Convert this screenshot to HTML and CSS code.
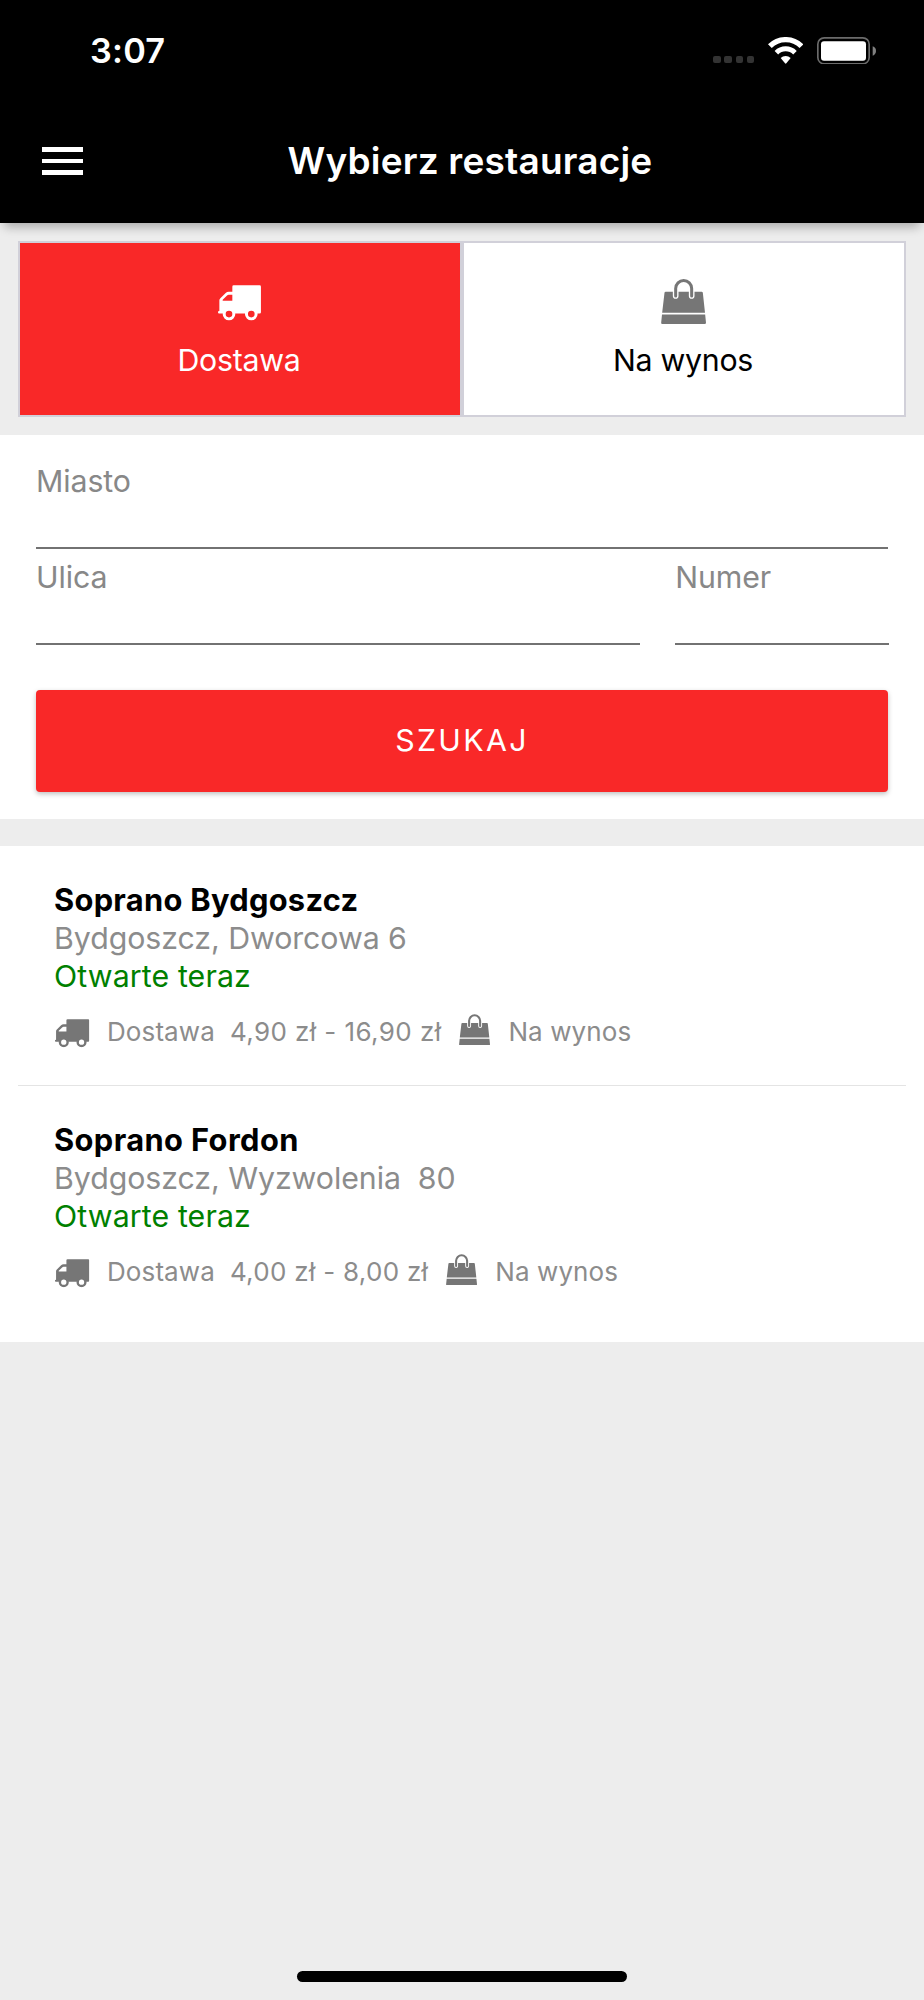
FILE: index.html
```html
<!DOCTYPE html>
<html lang="pl">
<head>
<meta charset="utf-8">
<title>Wybierz restauracje</title>
<link rel="stylesheet" href="styles.css">
</head>
<body>
<svg class="defs" aria-hidden="true">
  <symbol id="truck" viewBox="657 197 130 107">
    <path fill="currentColor" fill-rule="evenodd" d="M704 198H782Q786 198 786 202V279Q786 283 782 283H771.500A14.500 14.500 0 0 0 742.500 283H704.500A14.500 14.500 0 0 0 675.500 283H660Q657 283 657 280V277Q657 275 661 275V243Q661 240 664 237L680 221Q684 217 689 217H700V202Q700 198 704 198ZM700 226H689Q687 226 685 228L671 241V244H700Z"/>
    <g fill="none" stroke="currentColor" stroke-width="9"><circle cx="690" cy="284.500" r="14.500"/><circle cx="757" cy="284.500" r="14.500"/></g>
  </symbol>
  <symbol id="bag" viewBox="597 178 135 135">
    <path fill="currentColor" d="M611 216H719Q722 216 722.500 219L729 279H600.500L607.500 219Q608 216 611 216ZM600 284.500H729.500L732 309Q732 313 728 313H601Q597 313 597.500 309Z"/>
    <path fill="none" stroke="#fff" stroke-width="17" stroke-linecap="round" d="M641 229V216M689 229V216"/>
    <path fill="none" stroke="currentColor" stroke-width="9" stroke-linecap="round" d="M641 229V206.500a24 24 0 0 1 48 0V229"/>
  </symbol>
</svg>

<header class="header">
  <div class="status">
    <span class="clock">3:07</span>
    <div class="indicators">
      <div class="signal"><i></i><i></i><i></i><i></i></div>
      <svg class="wifi" viewBox="916 110 107 81">
        <g fill="none" stroke="#fff" stroke-width="16"><path d="M921.600 137.600a67 67 0 0 1 94.800 0"/><path stroke-width="15" d="M941.100 157.100a39.500 39.500 0 0 1 55.800 0"/></g>
        <path fill="#fff" d="M954 173a21 21 0 0 1 30 0L971 189q-2 2-4 0Z"/>
      </svg>
      <svg class="battery" viewBox="1065 109 177 83">
        <rect x="1067.500" y="111.500" width="154" height="78" rx="19" fill="none" stroke="#6b6b6b" stroke-width="5"/>
        <rect x="1077" y="122" width="135" height="58" rx="9" fill="#fff"/>
        <path d="M1232 137q10 4 10 14t-10 14Z" fill="#808080"/>
      </svg>
    </div>
  </div>
  <div class="toolbar">
    <div class="menu"><i></i><i></i><i></i></div>
    <h1 class="title">Wybierz restauracje</h1>
  </div>
</header>

<main>
  <nav class="tabs">
    <div class="tab tab-active">
      <span class="tab-icon"><svg class="truck-lg"><use href="#truck"/></svg></span>
      <span class="tab-label">Dostawa</span>
    </div>
    <div class="tab">
      <span class="tab-icon"><svg class="bag-lg"><use href="#bag"/></svg></span>
      <span class="tab-label">Na wynos</span>
    </div>
  </nav>

  <section class="form">
    <div class="field">Miasto</div>
    <div class="row">
      <div class="field field-street">Ulica</div>
      <div class="field field-number">Numer</div>
    </div>
    <div class="button">SZUKAJ</div>
  </section>

  <section class="list">
    <article class="item">
      <h2 class="name">Soprano Bydgoszcz</h2>
      <p class="address">Bydgoszcz, Dworcowa 6</p>
      <p class="open">Otwarte teraz</p>
      <div class="meta">
        <svg class="truck-sm"><use href="#truck"/></svg>
        <span class="delivery">Dostawa</span>
        <span class="price">4,90 zł - 16,90 zł</span>
        <svg class="bag-sm"><use href="#bag"/></svg>
        <span>Na wynos</span>
      </div>
    </article>
    <article class="item">
      <h2 class="name name-short">Soprano Fordon</h2>
      <p class="address">Bydgoszcz, Wyzwolenia&nbsp; 80</p>
      <p class="open">Otwarte teraz</p>
      <div class="meta">
        <svg class="truck-sm"><use href="#truck"/></svg>
        <span class="delivery">Dostawa</span>
        <span class="price price-short">4,00 zł - 8,00 zł</span>
        <svg class="bag-sm"><use href="#bag"/></svg>
        <span>Na wynos</span>
      </div>
    </article>
  </section>
</main>
<div class="home-bar"></div>
</body>
</html>
```
FILE: styles.css
```css
* { box-sizing: border-box; }
body {
  position: relative;
  margin: 0;
  height: 2000px;
  background: #ededed;
  color: #000;
  font: 400 30.3px/38px Inter, "Liberation Sans", sans-serif;
  overflow: hidden;
}
h1, h2, p { margin: 0; }
svg { display: block; flex: none; }
.defs { position: absolute; width: 0; height: 0; }

.header {
  height: 223px;
  background: #000;
  color: #fff;
  box-shadow: 0 9px 9px -5px rgba(0, 0, 0, .2), 0 5px 14px -3px rgba(0, 0, 0, .12);
}
.status {
  display: flex;
  justify-content: space-between;
  align-items: center;
  height: 101px;
  padding: 0 48px 0 90px;
}
.clock { font-size: 34.3px; font-weight: 600; letter-spacing: .2px; }
.indicators { display: flex; align-items: center; }
.signal { display: flex; gap: 3.7px; margin: 18px 13.5px 0 0; }
.signal i { width: 7.4px; height: 7.4px; border-radius: 2px; background: #333; }
.wifi { width: 35.7px; height: 27px; margin-right: 13.8px; }
.battery { width: 59px; height: 27.7px; }

.toolbar {
  display: grid;
  grid-template-columns: 245.5px 1fr;
  align-items: center;
  height: 120px;
  padding-left: 42px;
}
.menu { display: flex; flex-direction: column; gap: 6.5px; width: 41px; }
.menu i { height: 4.8px; background: #fff; }
.title { font-size: 37px; font-weight: 600; letter-spacing: .2px; }

.tabs { display: flex; height: 212px; padding: 18px 18px; }
.tab {
  flex: 1;
  display: flex;
  flex-direction: column;
  align-items: center;
  gap: 14px;
  padding: 32px 2px 0 0;
  border: 2px solid #d1d0d9;
  background: #fff;
}
.tab-active { background: #f92828; color: #fff; }
.tab-icon { display: flex; align-items: center; height: 52px; color: #767676; }
.tab-active .tab-icon { padding: 4px 0 0 2px; color: #fff; }
.tab-label { letter-spacing: -.25px; }
.truck-lg { width: 43.3px; height: 35.6px; }
.bag-lg { width: 45px; height: 45px; }

.form { height: 384px; padding: 18px 36px 0; background: #fff; }
.field {
  height: 96px;
  padding-top: 8.7px;
  border-bottom: 2px solid #727272;
  color: #888;
  letter-spacing: -.1px;
}
.row { display: flex; gap: 35.5px; margin-right: -1px; }
.field-street { flex: 1; }
.field-number { width: 213.7px; }
.button {
  height: 102px;
  margin-top: 45px;
  border-radius: 4px;
  background: #f92828;
  box-shadow: 0 2px 5px rgba(0, 0, 0, .25);
  color: #fff;
  line-height: 101px;
  letter-spacing: 2.34px;
  text-align: center;
}

.list { height: 496px; margin-top: 27px; padding: 0 18px; background: #fff; }
.item { height: 240px; padding: 35px 36px 0; border-bottom: 1px solid #e4e4e4; }
.item:last-child { border-bottom: 0; }
.name { font-size: 30.8px; font-weight: 700; letter-spacing: .3px; }
.name-short { letter-spacing: .4px; }
.address { color: #8c8c8c; letter-spacing: -.05px; }
.open { color: #008000; letter-spacing: .11px; }
.meta {
  display: flex;
  align-items: center;
  margin-top: 18px;
  padding-left: 1px;
  color: #8c8c8c;
  font-size: 26px;
  letter-spacing: .1px;
}
.meta svg { color: #767676; }
.truck-sm { width: 34.5px; height: 28.4px; margin: 3px 17.5px 0 0; }
.delivery { margin-right: 15px; }
.price { letter-spacing: .42px; }
.price-short { letter-spacing: .3px; }
.bag-sm { width: 31px; height: 31.5px; margin: -5px 18px 0; }

.home-bar {
  position: absolute;
  left: 297px;
  bottom: 18px;
  width: 330px;
  height: 11px;
  border-radius: 6px;
  background: #000;
}
```
